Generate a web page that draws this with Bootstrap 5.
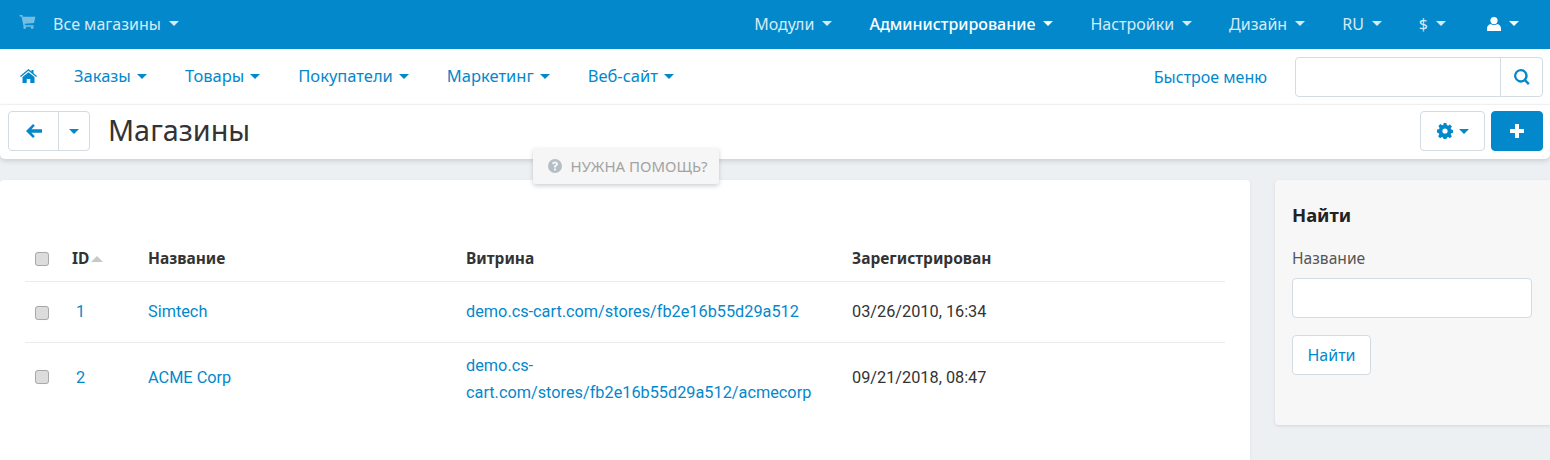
<!DOCTYPE html>
<html lang="ru">
<head>
<meta charset="utf-8">
<title>Магазины</title>
<link rel="stylesheet" href="https://cdn.jsdelivr.net/npm/bootstrap@5.3.0/dist/css/bootstrap.min.css">
<style>
:root{--brand:#0388cc;--line:#d3dbe3}
html,body{height:460px;overflow:hidden}
body{background:#edf0f3;font-family:"Noto Sans","Open Sans",sans-serif;font-size:16px;color:#333}
.ic{fill:currentColor;display:block;flex:none}
.tri{display:inline-block;width:0;height:0;border-left:5px solid transparent;border-right:5px solid transparent;border-top:5px solid currentColor;flex:none}
.topbar{height:49px;background:var(--brand);padding:0 31px 2px 19px;color:#d6ebf6;font-size:16px}
.topbar .navlink,.subbar .navlink{display:flex;align-items:center;color:inherit;text-decoration:none;white-space:nowrap}
.topbar .navlink{gap:8px}
.subbar .navlink{gap:6px}
.topbar .shop{opacity:.45;color:#fff;margin-bottom:4px}
.shopname{margin-left:9px}
.topbar .strong{color:#fff;font-weight:500}
.topbar .white{color:#fff;margin-left:4px}
.rgap{gap:37px}
.subbar{height:56px;background:#fff;padding:0 7px 0 20px;color:var(--brand);border-bottom:1px solid #f5f6f7;font-size:16.5px}
.lgap{gap:38px}
.homeic{margin:-2px -1px 0 0}
.quick{font-size:16px}
.searchbox{width:248px;height:40px;margin-left:28px}
.searchbox .form-control{border-color:var(--line);border-radius:4px 0 0 4px;height:40px}
.searchbox .btn{width:43px;height:40px;padding:0;border:1px solid var(--line);border-radius:0 4px 4px 0;background:#fff;color:var(--brand);display:flex;align-items:center;justify-content:center}
.titlebar{height:54px;background:#fff;padding:0 7px 0 8px;border-radius:0 0 5px 5px;box-shadow:0 2px 5px rgba(60,75,90,.2);position:relative;z-index:2}
.backgrp{height:40px;margin-top:-2px;border:1px solid var(--line);border-radius:4px;color:var(--brand)}
.backgrp span{display:flex;align-items:center;justify-content:center;height:100%}
.backgrp .b1{width:50px;border-right:1px solid var(--line)}
.backgrp .b2{width:30px}
.pagetitle{font-size:28.8px;font-weight:400;color:#333;margin:-4px 0 0 18px;line-height:40px}
.actbtn{height:40px;margin-top:-2px;border-radius:4px;display:flex;align-items:center;justify-content:center;padding:0}
.gearbtn{width:65px;gap:6px;background:#fff;border:1px solid var(--line);color:var(--brand)}
.plusbtn{width:52px;margin-left:6px;background:var(--brand);border:1px solid var(--brand);color:#fff}
.helptab{position:absolute;left:533px;top:43px;width:186px;height:36px;padding-left:4px;background:#f6f6f6;box-shadow:0 2px 4px rgba(60,75,90,.25);color:#a3a3a3;font-size:15px;gap:8px;z-index:3;border-radius:0 0 3px 3px}
.helptab svg{color:#b5bdc6}
.mainwrap{margin-top:21px;gap:25px;align-items:flex-start}
.panel-main{width:1250px;height:300px;background:#fff;border-radius:4px 4px 0 0;box-shadow:0 1px 3px rgba(60,75,90,.1);padding:55px 25px 0;font-family:Roboto,sans-serif;flex:none}
.stores{width:1200px;margin:0;table-layout:fixed;font-size:16.3px}
.stores td,.stores th{padding:0;vertical-align:middle;border-bottom:1px solid #e9ebee;color:#333}
.stores tr:last-child td{border-bottom:0}
.stores thead th{height:46px;padding-top:2px;font-weight:700;font-family:"Noto Sans",sans-serif;font-size:15.5px}
.stores a{color:var(--brand);text-decoration:none}
.row-a td{height:61px;padding-top:2px}.row-b td{height:70px;line-height:27px}
.stores .row-b .storecell{padding-top:3px}
.fakecheck{display:block;width:14px;height:14px;margin-left:10px;background:#dcdcdc;border:1px solid #a9a9a9;border-radius:3px;box-shadow:0 0 1px rgba(0,0,0,.1)}
.sorttri{display:inline-block;margin-left:2px;border-left:6px solid transparent;border-right:6px solid transparent;border-bottom:6px solid #c5c8cc;vertical-align:2px}
.idnum{padding-left:4px}
.panel-side{width:275px;height:245px;background:#f7f7f8;border-radius:4px 0 0 4px;box-shadow:0 1px 3px rgba(60,75,90,.15);padding:24px 17px;flex:none}
.panel-side h3{font-size:18.4px;font-weight:700;color:#222;margin:0 0 22px;line-height:22px}
.panel-side label{display:block;color:#555;font-size:15.6px;line-height:20px;margin-bottom:10px}
.panel-side .form-control{width:240px;height:40px;border-color:var(--line);border-radius:4px;margin-bottom:17px}
.panel-side .btn{height:40px;width:79px;padding:0;background:#fff;border:1px solid var(--line);border-radius:4px;color:var(--brand);font-size:16px}
</style>
</head>
<body>
<nav class="topbar d-flex align-items-center">
  <a class="navlink" href="#"><svg class="ic shop" width="17" height="14" viewBox="0 0 17 15"><path d="M0 0h3l.5 2H17l-1.500 6.500-10 1 .3 1.500H15v1.500H4.400L2 1.500H0z"/><circle cx="5.500" cy="13.500" r="1.500"/><circle cx="13.500" cy="13.500" r="1.500"/></svg><span class="shopname">Все магазины</span><i class="tri"></i></a>
  <div class="d-flex align-items-center ms-auto rgap">
    <a class="navlink" href="#">Модули<i class="tri"></i></a>
    <a class="navlink strong" href="#">Администрирование<i class="tri"></i></a>
    <a class="navlink" href="#">Настройки<i class="tri"></i></a>
    <a class="navlink" href="#">Дизайн<i class="tri"></i></a>
    <a class="navlink" href="#">RU<i class="tri"></i></a>
    <a class="navlink" href="#">$<i class="tri"></i></a>
    <a class="navlink white" href="#"><svg class="ic" width="14" height="14" viewBox="0 0 14 14"><circle cx="7" cy="3.600" r="3.600"/><path d="M0 14v-2.500C0 9 1.800 7.200 3.800 7c.8.700 2 1.100 3.200 1.100s2.400-.4 3.200-1.100c2 .2 3.800 2 3.800 4.500V14z"/></svg><i class="tri"></i></a>
  </div>
</nav>
<nav class="subbar d-flex align-items-center">
  <div class="d-flex align-items-center lgap">
    <a class="navlink" href="#"><svg class="ic homeic" width="17" height="14" viewBox="0 0 17 14"><path d="M8.500 0l3 2.500V1h2v3.200L17 7l-.9 1L8.500 1.800.9 8 0 7z"/><path d="M8.500 3.200L14.500 8v6h-4.200v-4H6.700v4H2.500V8z"/></svg></a>
    <a class="navlink" href="#">Заказы<i class="tri"></i></a>
    <a class="navlink" href="#">Товары<i class="tri"></i></a>
    <a class="navlink" href="#">Покупатели<i class="tri"></i></a>
    <a class="navlink" href="#">Маркетинг<i class="tri"></i></a>
    <a class="navlink" href="#">Веб-сайт<i class="tri"></i></a>
  </div>
  <a class="navlink quick ms-auto" href="#">Быстрое меню</a>
  <div class="input-group searchbox flex-nowrap">
    <input type="text" class="form-control" aria-label="Быстрое меню">
    <button class="btn" type="button" aria-label="Поиск"><svg class="ic" width="16" height="16" viewBox="0 0 16 16"><path fill-rule="evenodd" d="M6.800 0a6.800 6.800 0 0 1 5.500 10.800l3.400 3.400-1.700 1.700-3.400-3.400A6.800 6.800 0 1 1 6.800 0zm0 2.300a4.500 4.500 0 1 0 0 9 4.500 4.500 0 0 0 0-9z"/></svg></button>
  </div>
</nav>
<header class="titlebar d-flex align-items-center">
  <div class="backgrp d-flex">
    <span class="b1"><svg class="ic" width="16" height="14" viewBox="0 0 16 14"><path d="M7 0l1.800 1.800L5.500 5.200H16v3.600H5.500l3.300 3.400L7 14 0 7z"/></svg></span>
    <span class="b2"><i class="tri"></i></span>
  </div>
  <h1 class="pagetitle">Магазины</h1>
  <div class="d-flex ms-auto">
    <button class="actbtn gearbtn" type="button" aria-label="Настройки"><svg class="ic" width="16" height="16" viewBox="0 0 16 16"><path fill-rule="evenodd" d="M6.600 0h2.800l.4 2.100 1.300.6 1.800-1.200 2 2-1.200 1.800.6 1.300 2.100.4v2.800l-2.100.4-.6 1.300 1.200 1.800-2 2-1.800-1.200-1.300.6-.4 2.100H6.600l-.4-2.100-1.300-.6-1.800 1.200-2-2 1.200-1.800-.6-1.300L-.1 9.400V6.600l2.100-.4.600-1.300-1.200-1.800 2-2 1.800 1.200 1.300-.6zM8 5.400a2.600 2.600 0 1 0 0 5.200 2.600 2.600 0 0 0 0-5.200z"/></svg><i class="tri"></i></button>
    <button class="actbtn plusbtn" type="button" aria-label="Добавить"><svg class="ic" width="14" height="14" viewBox="0 0 14 14"><path d="M5 0h4v5h5v4H9v5H5V9H0V5h5z"/></svg></button>
  </div>
  <div class="helptab d-flex align-items-center justify-content-center"><svg class="ic" width="14" height="14" viewBox="0 0 14 14"><path fill-rule="evenodd" d="M7 0a7 7 0 1 1 0 14A7 7 0 0 1 7 0zM6 9.500v2h2v-2zM7 2.500c-1.700 0-2.800.9-3 2.300l1.800.4c.1-.7.500-1 1.100-1 .6 0 1 .3 1 .8 0 .4-.3.700-.8 1-.8.500-1.100 1-1.100 1.900v.6h2v-.4c0-.5.2-.7.7-1 .8-.5 1.300-1.100 1.300-2.100 0-1.500-1.200-2.500-3-2.500z"/></svg>НУЖНА ПОМОЩЬ?</div>
</header>
<div class="mainwrap d-flex">
  <main class="panel-main">
    <table class="table stores">
      <colgroup><col style="width:47px"><col style="width:76px"><col style="width:318px"><col style="width:386px"><col></colgroup>
      <thead><tr><th><span class="fakecheck"></span></th><th>ID<i class="sorttri"></i></th><th>Название</th><th>Витрина</th><th>Зарегистрирован</th></tr></thead>
      <tbody>
        <tr class="row-a"><td><span class="fakecheck"></span></td><td><a class="idnum" href="#">1</a></td><td><a href="#">Simtech</a></td><td><a href="#">demo.cs-cart.com/stores/fb2e16b55d29a512</a></td><td>03/26/2010, 16:34</td></tr>
        <tr class="row-b"><td><span class="fakecheck"></span></td><td><a class="idnum" href="#">2</a></td><td><a href="#">ACME Corp</a></td><td class="storecell"><a href="#">demo.cs-<br>cart.com/stores/fb2e16b55d29a512/acmecorp</a></td><td>09/21/2018, 08:47</td></tr>
      </tbody>
    </table>
  </main>
  <aside class="panel-side">
    <h3>Найти</h3>
    <label for="q">Название</label>
    <input id="q" type="text" class="form-control">
    <button class="btn" type="button">Найти</button>
  </aside>
</div>
</body>
</html>
